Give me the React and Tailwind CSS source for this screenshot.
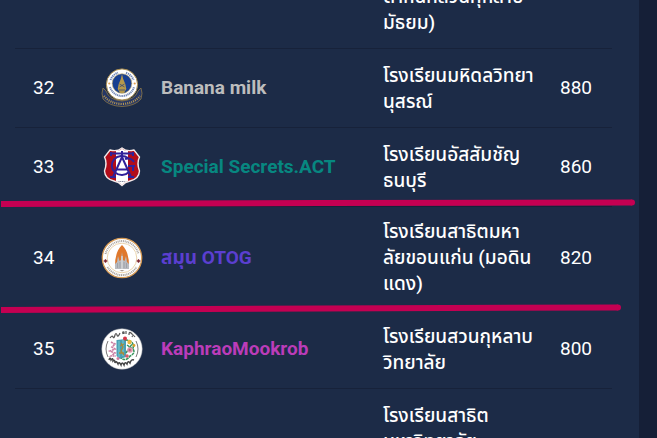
import React from "react";

function MahidolCrest() {
  return (
    <svg viewBox="0 0 42 42" className="block size-[42px]" role="img" aria-label="School crest">
      <path d="M2 21 Q0 26 2 32 Q8 39 21 39.500 Q34 39 40 32 Q42 26 40 21 L37 24 Q34 33 21 34 Q8 33 5 24 Z" fill="#263765" stroke="#8f7845" strokeWidth="0.800" />
      <path d="M3 29 Q9 36.500 21 37 Q33 36.500 39 29" fill="none" stroke="#b8994f" strokeWidth="2.200" strokeDasharray="1 1.100" />
      <circle cx="21" cy="17.500" r="15.600" fill="#fff" stroke="#a98c4d" strokeWidth="1" />
      <path d="M9.500 13 A12.500 12.500 0 0 1 17 5.700 M25 5.700 A12.500 12.500 0 0 1 32.500 13" fill="none" stroke="#6d84b5" strokeWidth="2" strokeDasharray="1.300 0.700" />
      <path d="M9 20 A12.500 12.500 0 0 0 33 20" fill="none" stroke="#7287b5" strokeWidth="2" strokeDasharray="1.200 0.600" />
      <circle cx="8.300" cy="16.500" r="1.100" fill="#e1a052" />
      <circle cx="33.700" cy="16.500" r="1.100" fill="#e1a052" />
      <circle cx="21" cy="16.500" r="9.800" fill="#173f91" stroke="#c7ad6a" strokeWidth="0.600" />
      <path d="M21 7 L22.200 12 L24.300 17 L25.300 22 L23 26 H19 L16.700 22 L17.700 17 L19.800 12 Z" fill="#b4984c" />
      <path d="M18.500 17 L23.500 20 M23.500 17 L18.500 20 M18 23 H24" stroke="#27417d" strokeWidth="0.700" />
    </svg>
  );
}

function AssumptionCrest() {
  return (
    <svg viewBox="0 0 42 42" className="block size-[42px]" role="img" aria-label="School crest">
      <path d="M9 4 Q16 6 21 2 Q26 6 33 4 L38.500 11 Q35.500 17 38.500 25 Q38 33 29 35 Q24 36 21 39.500 Q18 36 13 35 Q4 33 3.500 25 Q6.500 17 3.500 11 Z" fill="#b20c19" stroke="#f2e9e9" strokeWidth="1.400" />
      <path d="M15 5 Q19 4.500 21 2.800 Q23 4.500 27 5 V35 Q23 36.500 21 39 Q19 36.500 15 35 Z" fill="#fff" />
      <g fill="none" stroke="#30219a" strokeWidth="2">
        <path d="M10 7.500 H32 M10 6 V10 M32 6 V10 M21 5 V12" />
        <path d="M21 11 L12 31 M21 11 L30 31 M15.500 23.500 H26.500 M9 31 H15 M27 31 H33" />
        <path d="M27 12 A10 9.500 0 1 0 28 26" />
        <path d="M24 13 Q30 11 33 16 M27 20 H34 M32 20 V25" />
      </g>
      <path d="M17.500 35.500 H24.500" stroke="#777890" strokeWidth="1.200" strokeDasharray="1 0.700" />
    </svg>
  );
}

function KhonKaenCrest() {
  return (
    <svg viewBox="0 0 42 42" className="block size-[42px]" role="img" aria-label="School crest">
      <circle cx="21" cy="21" r="19.700" fill="#fff" stroke="#d59a55" strokeWidth="1.300" />
      <circle cx="21" cy="21" r="14.800" fill="none" stroke="#e9cfa4" strokeWidth="0.900" />
      <path d="M4.500 17 A17 17 0 0 1 37.500 17" fill="none" stroke="#aaa49e" strokeWidth="2" strokeDasharray="1 0.800" />
      <path d="M6.500 30 A17 17 0 0 0 35.500 30" fill="none" stroke="#aaa49e" strokeWidth="2" strokeDasharray="1.100 0.700" />
      <path d="M4.500 22.200 V25.800 M2.700 24 H6.300 M37.500 22.200 V25.800 M35.700 24 H39.300" stroke="#7d2531" strokeWidth="1.400" />
      <path d="M21 8 Q28.500 15 28 31 H14 Q13.500 15 21 8 Z" fill="#df782d" />
      <path d="M17 19 L18.500 24 L20 23 L21 15 L22 23 L23.500 24 L25 19 L26 25 L28 27 V32 H14 V27 L16 25 Z" fill="#b9bbc0" />
      <path d="M21 19 V32" stroke="#d5d6d7" strokeWidth="1.500" />
      <path d="M19 25 V31 M23 25 V31 M16.500 26 V31 M25.500 26 V31" stroke="#8e939b" strokeWidth="0.600" />
      <path d="M18.500 33 H23.500 L21 34.500 Z" fill="#a79b91" />
    </svg>
  );
}

function SuankularbCrest() {
  return (
    <svg viewBox="0 0 42 42" className="block size-[42px]" role="img" aria-label="School crest">
      <circle cx="21" cy="21" r="20.200" fill="#fff" stroke="#b8bbbd" strokeWidth="0.500" />
      <path d="M9 10 q2 -3 3 -1 t2 -2 M14 7 q1 -3 2 0 t3 -2 M22 6 q-1 -3 1 -2 v2 M25 6 v-3 M28 7 q0 -4 2 -2 t2 1 M31 9 q1 -3 3 0" fill="none" stroke="#555" strokeWidth="1.200" />
      <path d="M8 32 q1 -4 2 0 q2 -3 2 1 q2 -2 2 2 q1 -3 3 1 q1 -3 3 1 q1 -4 3 0 q1 -4 3 -1 q1 -4 3 -1 q1 -4 4 -3" fill="none" stroke="#444" strokeWidth="1.500" />
      <path d="M7 13 Q3 21 7 29 M35 13 Q39 21 35 29" fill="none" stroke="#555" strokeWidth="0.800" />
      <path d="M15.500 12 L25 11 V29 L19 31 L15.500 28 Z" fill="#499fb5" />
      <path d="M18 13 V29 M22 12 V28" stroke="#72c6ce" strokeWidth="1.200" />
      <path d="M20 15 L22 19 L20 23 L23 27 M19 18 L23 16 M18 25 H23" fill="none" stroke="#a58b3c" strokeWidth="1.300" />
      <path d="M10 14 L14 16 L11 19 L14 21 L9 23 L14 25 L10 28 L15 28" fill="none" stroke="#cb7fa4" strokeWidth="1.700" strokeDasharray="2 0.700" />
      <path d="M24 12 Q34 12 32 21 Q35 25 29 28 Q25 34 20 30 M26 17 L33 22 M25 25 L31 16" fill="none" stroke="#37945d" strokeWidth="1.500" strokeDasharray="3 0.700" />
      <circle cx="24" cy="10.500" r="2" fill="#d43646" />
      <circle cx="28.500" cy="14" r="2.200" fill="#e9b73f" />
      <circle cx="33" cy="17.500" r="1.400" fill="#d9a02c" />
      <circle cx="29" cy="22" r="2.800" fill="#e29bad" />
      <circle cx="28.700" cy="22" r="1.200" fill="#b96079" />
      <circle cx="26" cy="28" r="1.800" fill="#d65c68" />
      <circle cx="17" cy="30.500" r="1.500" fill="#d37ca0" />
    </svg>
  );
}

const teams = [
  { id: "31", school: ["ตำหนักสวนกุหลาบ", "มัธยม)"] },
  { id: "32", rank: 32, crest: MahidolCrest, name: "Banana milk", color: "text-[#bdbdbd]", school: ["โรงเรียนมหิดลวิทยา", "นุสรณ์"], score: 880 },
  { id: "33", rank: 33, crest: AssumptionCrest, name: "Special Secrets.ACT", color: "text-[#078780]", school: ["โรงเรียนอัสสัมชัญ", "ธนบุรี"], score: 860 },
  { id: "34", rank: 34, crest: KhonKaenCrest, name: "สมุน OTOG", color: "text-[#5b3fd0]", school: ["โรงเรียนสาธิตมหา", "ลัยขอนแก่น (มอดิน", "แดง)"], score: 820 },
  { id: "35", rank: 35, crest: SuankularbCrest, name: "KaphraoMookrob", color: "text-[#bb3cb9]", school: ["โรงเรียนสวนกุหลาบ", "วิทยาลัย"], score: 800 },
  { id: "36", school: ["โรงเรียนสาธิต", "มหาวิทยาลัย"] },
];

function TeamRow({ team }) {
  const Crest = team.crest;
  return (
    <tr className="h-[79px] border-b border-[#17223a]">
      <td className="pl-[18px]">{team.rank}</td>
      <td className="pl-2">{Crest && <Crest />}</td>
      <td className={`pl-2 font-bold ${team.color || ""}`}>{team.name}</td>
      <td className="py-3 pl-2 align-bottom font-medium">
        {team.school.map((line) => (
          <span key={line} className="block whitespace-nowrap">{line}</span>
        ))}
      </td>
      <td className="pl-2">{team.score}</td>
    </tr>
  );
}

function Markers() {
  return (
    <svg viewBox="0 0 640 120" className="pointer-events-none absolute left-0 top-[197px] h-[120px] w-[640px]" fill="none" stroke="#c40052" strokeWidth="6" strokeLinejoin="round" aria-hidden="true">
      <path d="M1 7 L320 6 L632 5.500" />
      <path d="M1 113 L320 111.500 L618 110.500" />
      <g fill="#c40052" stroke="none">
        <circle cx="632" cy="5.500" r="3" />
        <circle cx="618" cy="110.500" r="3" />
      </g>
    </svg>
  );
}

export default function App() {
  return (
    <div className="relative flex h-screen overflow-hidden bg-[#151f37] font-[Roboto,'Noto_Sans_Thai',Tahoma,sans-serif] text-[19px] leading-[26px] text-white">
      <main className="mr-[18px] min-w-0 flex-1 bg-[#1c2b47] pl-[15px] pr-[27px]">
        <table className="-mt-[31px] w-full table-fixed border-collapse text-left">
          <colgroup>
            <col className="w-[78px]" />
            <col className="w-[60px]" />
            <col />
            <col className="w-[177px]" />
            <col className="w-[60px]" />
          </colgroup>
          <tbody>
            {teams.map((team) => (
              <TeamRow key={team.id} team={team} />
            ))}
          </tbody>
        </table>
      </main>
      <Markers />
    </div>
  );
}
